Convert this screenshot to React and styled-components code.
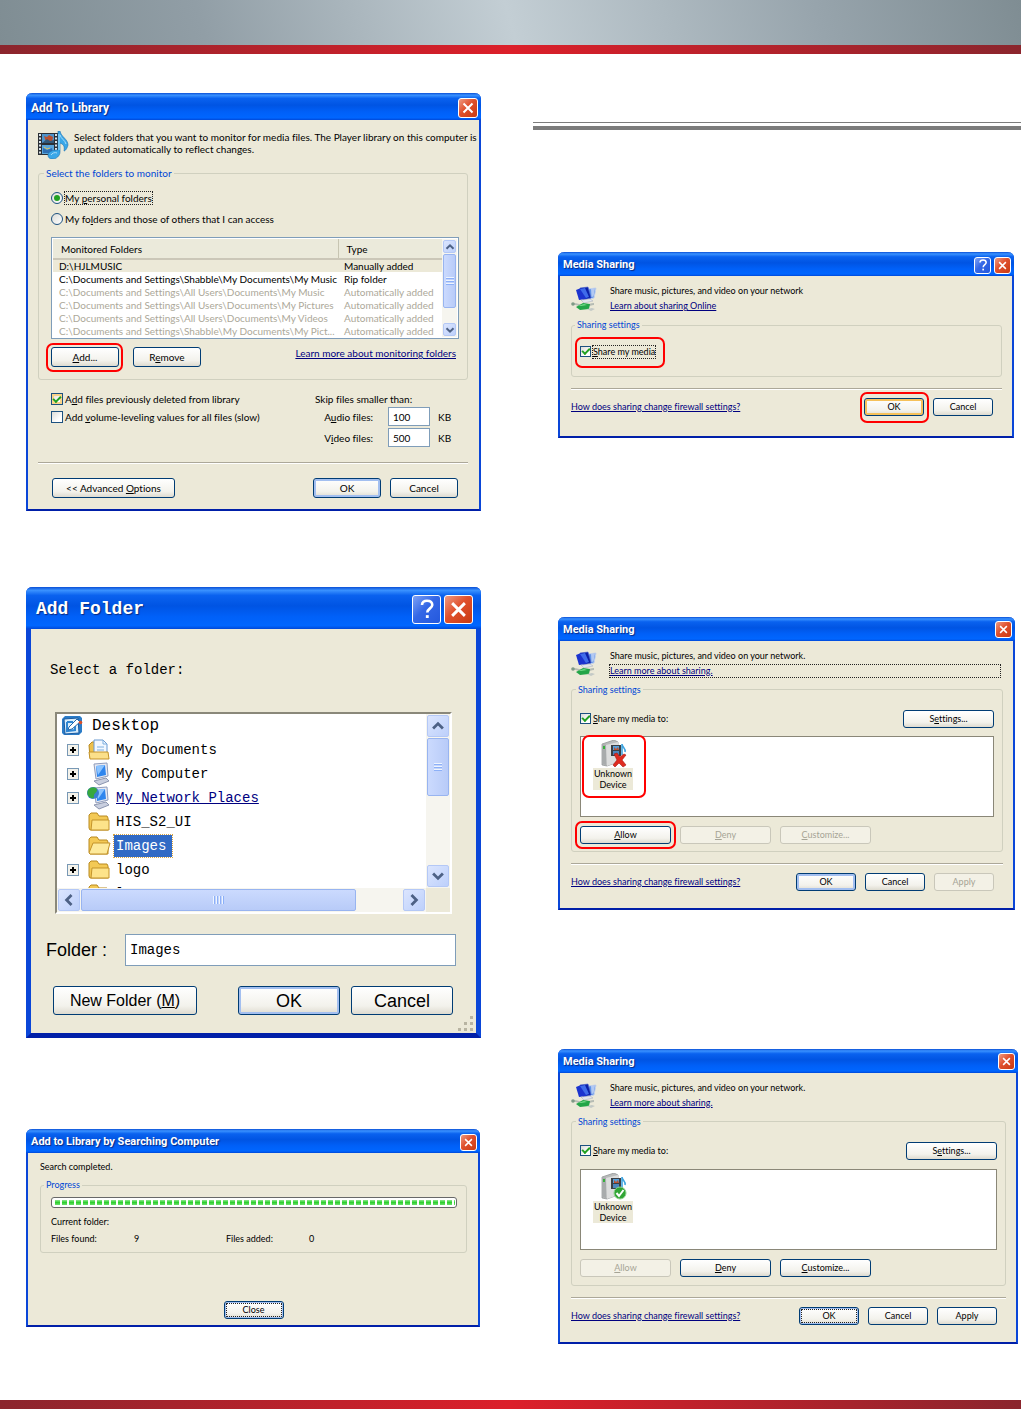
import { useId, useState } from "react";
import styled, { createGlobalStyle, css } from "styled-components";

const GlobalStyle = createGlobalStyle`
  * {
    box-sizing: border-box;
  }
  body {
    margin: 0;
    background: #fff;
    color: #000;
    font-family: Lato, "Liberation Sans", Arial, sans-serif;
    font-size: 10px;
    font-variant-ligatures: none;
    line-height: 12px;
  }
  button,
  input {
    font: inherit;
    color: inherit;
  }
  p,
  ul {
    margin: 0;
    padding: 0;
  }
`;

/* ---------- page ---------- */

const Banner = styled.header`
  height: 54px;
  border-bottom: 9px solid transparent;
  background: linear-gradient(75deg, #7f8d93, #919ea6 20%, #c3ced4 50%, #97a4ac 80%, #7f8d93)
      padding-box,
    linear-gradient(90deg, #8b252d, #dc1f2a 50%, #8b252d) border-box;
`;

const Stripe = styled.footer`
  height: 9px;
  background: linear-gradient(90deg, #8b252d, #dc1f2a 50%, #8b252d);
`;

const Columns = styled.main`
  display: grid;
  grid-template-columns: minmax(0, 455fr) minmax(0, 488fr);
  column-gap: 52px;
  padding-left: 26px;
  padding-bottom: 56px;
`;

const LeftColumn = styled.div`
  display: flex;
  flex-direction: column;
  padding-top: 39px;
  & > :nth-child(2) {
    margin-top: 76px;
  }
  & > :nth-child(3) {
    margin-top: 91px;
  }
`;

const RightColumn = styled.div`
  padding-top: 68px;
`;

const DoubleRule = styled.hr`
  height: 8px;
  margin: 0;
  border: solid #7c7c7c;
  border-width: 1px 0 4px;
`;

const Shots = styled.div`
  display: flex;
  flex-direction: column;
  padding: 122px 3px 0 25px;
  & > :nth-child(2) {
    margin-top: 179px;
  }
  & > :nth-child(3) {
    margin-top: 139px;
  }
`;

/* ---------- window ---------- */

const Frame = styled.section`
  border: solid #0a46d8;
  border-width: 0 ${(p) => p.$edge}px ${(p) => p.$edge}px;
  border-bottom-color: #001fa8;
  border-radius: 6px 6px 0 0;
  background: #ece9d8;
  margin-right: ${(p) => p.$inset || 0}px;
  font-size: ${(p) => (p.$small ? 9 : 10)}px;
`;

const TitleBar = styled.header`
  display: flex;
  align-items: center;
  gap: 3px;
  height: ${(p) => p.$height}px;
  margin: 0 -${(p) => p.$edge}px;
  padding: 2px ${(p) => (p.$edge > 2 ? "8px 0 10px" : "3px 0 5px")};
  border-radius: 6px 6px 0 0;
  background: linear-gradient(
    #0a4fd6,
    #3a92ff 8%,
    #0a62ef 20%,
    #0054e3 45%,
    #0060f8 70%,
    #0066ff 92%,
    #0048d8
  );
  color: #fff;
  h2 {
    flex: 1;
    margin: 0;
    font-size: ${(p) => p.$size}px;
    line-height: 20px;
    font-family: ${(p) => p.$font};
    text-shadow: 1px 1px 1px #0a2a80;
  }
`;

const CaptionButton = styled.button`
  display: flex;
  align-items: center;
  justify-content: center;
  width: ${(p) => p.$size}px;
  height: ${(p) => p.$size}px;
  padding: 0;
  border: 1px solid #fff;
  border-radius: 3px;
  background: ${(p) =>
    p.$help
      ? "linear-gradient(135deg, #7ea2f5, #3467e6 45%, #2458dd)"
      : "linear-gradient(135deg, #ee9a82, #e0502c 45%, #c83a12)"};
`;

const Body = styled.div`
  padding: ${(p) => p.$pad};
`;

const Intro = styled.div`
  display: flex;
  gap: 5px;
  margin-right: -10px;
  svg {
    flex: none;
  }
`;

const Group = styled.fieldset`
  min-width: 0;
  margin: ${(p) => p.$top}px 0 0;
  padding: ${(p) => p.$pad};
  border: 1px solid #d0d0bf;
  border-radius: 3px;
  legend {
    margin-left: -${(p) => p.$outdent || 7}px;
    padding: 0 2px;
    color: #0046d5;
  }
`;

const Divider = styled.hr`
  height: 2px;
  margin: ${(p) => p.$top}px 0 0;
  border: 0;
  border-top: 1px solid #aca899;
  border-bottom: 1px solid #fff;
`;

const Button = styled.button`
  flex: none;
  width: ${(p) => p.$width}px;
  height: ${(p) => p.$height || 18}px;
  padding: 0;
  border: 1px solid #003c74;
  border-radius: 3px;
  background: linear-gradient(#fff, #f3f2ec 70%, #dedbd0);
  text-align: center;
  line-height: 12px;
  ${(p) =>
    p.$primary &&
    css`
      box-shadow: inset 0 0 0 2px #a3bff0;
    `}
  ${(p) =>
    p.$hot &&
    css`
      box-shadow: inset 0 0 0 2px #f6c15a;
    `}
  ${(p) =>
    p.$focused &&
    css`
      outline: 1px dotted #222;
      outline-offset: -3px;
      box-shadow: inset 0 0 0 1px #a3bff0;
    `}
  &:disabled {
    border-color: #c9c7ba;
    background: #f3f1e6;
    color: #a6a495;
  }
`;

const Link = styled.a`
  color: #00007f;
  text-decoration: underline;
`;

const Callout = styled.div`
  position: relative;
  display: inline-flex;
  &::after {
    content: "";
    position: absolute;
    inset: ${(p) => p.$inset};
    border: 2px solid #f00;
    border-radius: 7px;
    pointer-events: none;
  }
`;

const Choice = styled.label`
  display: flex;
  align-items: center;
  gap: 2px;
  span {
    outline: ${(p) => (p.$focused ? "1px dotted #222" : "none")};
  }
`;

const Radio = styled.input.attrs({ type: "radio" })`
  appearance: none;
  display: grid;
  place-items: center;
  width: 12px;
  height: 12px;
  margin: 0;
  border: 1px solid #1c5180;
  border-radius: 50%;
  background: linear-gradient(135deg, #dcdcd7, #fff);
  &:checked::after {
    content: "";
    width: 6px;
    height: 6px;
    border-radius: 50%;
    background: #21a121;
  }
`;

const Check = styled.input.attrs({ type: "checkbox" })`
  appearance: none;
  display: grid;
  place-items: center;
  width: ${(p) => p.$size || 11}px;
  height: ${(p) => p.$size || 11}px;
  margin: 0;
  border: 1px solid #1c5180;
  background: linear-gradient(135deg, #dcdcd7, #fff 70%);
  box-shadow: ${(p) => (p.$hot ? "inset 0 0 0 2px #f9d38a" : "none")};
  &:checked::after {
    content: "";
    width: 6px;
    height: 3px;
    border: solid #21a121;
    border-width: 0 0 2px 2px;
    transform: translateY(-1px) rotate(-45deg);
  }
`;

const TextBox = styled.input`
  width: 100%;
  height: ${(p) => p.$height}px;
  padding: 0 4px;
  border: 1px solid #7f9db9;
  border-radius: 0;
  background: #fff;
`;

/* ---------- scroll bars ---------- */

const Scroll = styled.div`
  display: flex;
  flex-direction: ${(p) => (p.$across ? "row" : "column")};
  gap: 1px;
  padding: 1px;
  background: #f6f5ef;
  ${(p) => (p.$across ? "height" : "width")}: ${(p) => p.$size}px;
`;

const ScrollArrow = styled.button`
  flex: none;
  display: flex;
  align-items: center;
  justify-content: center;
  width: ${(p) => p.$size}px;
  height: ${(p) => p.$size}px;
  padding: 0;
  border: 1px solid #b4c8f6;
  border-radius: 2px;
  background: linear-gradient(135deg, #dbe5fe, #bdd0fb);
`;

const Thumb = styled.div`
  flex: 0 0 ${(p) => p.$length};
  display: flex;
  align-items: center;
  justify-content: center;
  border: 1px solid #98b4f0;
  border-radius: 2px;
  background: linear-gradient(${(p) => (p.$across ? 180 : 90)}deg, #cbdafe, #b8cbf8);
  &::before {
    content: "";
    width: ${(p) => (p.$across ? 11 : 8)}px;
    height: 8px;
    background: repeating-linear-gradient(
      ${(p) => (p.$across ? 90 : 180)}deg,
      #eef4fe 0 1px,
      #8cb0f8 1px 2px,
      transparent 2px 3px
    );
  }
`;

const Spacer = styled.div`
  flex: 1;
`;

const turns = { up: 0, right: 90, down: 180, left: 270 };

function Arrow({ to, size }) {
  return (
    <svg width={size} height={size} viewBox="0 0 10 10">
      <path
        d="M1.5 6.8 5 3.3l3.500 3.500"
        fill="none"
        stroke="#4d6185"
        strokeWidth="2"
        transform={`rotate(${turns[to]} 5 5)`}
      />
    </svg>
  );
}

function ScrollBar({ across, size, length }) {
  const ends = across ? ["left", "right"] : ["up", "down"];
  const glyph = size > 20 ? 14 : 10;
  return (
    <Scroll $across={across} $size={size}>
      <ScrollArrow $size={size - 2} aria-label={`Scroll ${ends[0]}`}>
        <Arrow to={ends[0]} size={glyph} />
      </ScrollArrow>
      <Thumb $across={across} $length={length} />
      <Spacer />
      <ScrollArrow $size={size - 2} aria-label={`Scroll ${ends[1]}`}>
        <Arrow to={ends[1]} size={glyph} />
      </ScrollArrow>
    </Scroll>
  );
}

/* ---------- icons ---------- */

function CloseGlyph({ size }) {
  return (
    <svg width={size} height={size} viewBox="0 0 12 12">
      <path d="M1.500 1.500l9 9M10.500 1.500l-9 9" stroke="#fff" strokeWidth="2" />
    </svg>
  );
}

function HelpGlyph({ size }) {
  return (
    <svg width={size} height={size} viewBox="0 0 12 14">
      <path
        d="M2.500 4.200C2.500 2 4 1.200 6 1.200s3.700 1 3.700 3c0 2.300-3.500 2.500-3.500 5.300"
        fill="none"
        stroke="#fff"
        strokeWidth="1.800"
      />
      <rect x="5.200" y="11.300" width="2" height="2" fill="#fff" />
    </svg>
  );
}

function LibraryIcon() {
  return (
    <svg width="31" height="28" viewBox="0 0 31 28">
      <path d="M0 2h20v22H0z" fill="#2b3036" />
      <path d="M4 3h12v9H4z" fill="#4d94cc" />
      <path d="M4 14h12v9H4z" fill="#59a5da" />
      <path d="M6 5l3 1 2-2 4 2-1 5-3-1-3 1z" fill="#b9502f" />
      <path d="M4 12l5-4 3 2 4-1v3z" fill="#315878" />
      <path d="M5 17l4 2 5-2 1 5H5z" fill="#2e6fb4" />
      <path d="M6 16l3 2 3-1" fill="none" stroke="#e0c25b" />
      <path
        d="M2 3v20M18 3v20"
        stroke="#d9e2e8"
        strokeWidth="2"
        strokeDasharray="2 1.500"
      />
      <path
        d="M20 0h2c1 6 8 8 8 14-1 4-3 6-4 6 1-5-1-7-4-8v9c0 4-4 7-7 7-4 0-5-2-5-4 0-3 4-5 10-5z"
        fill="#3aa7e8"
        stroke="#1c6fae"
        strokeWidth=".6"
      />
      <path d="M21 3v16" stroke="#6cc4f4" strokeWidth="2" />
      <path d="M22 4c1 4 5 5 6 9M13 24c1-2 4-3 6-2" fill="none" stroke="#a9dcfa" />
    </svg>
  );
}

function NetworkIcon() {
  return (
    <svg width="28" height="26" viewBox="0 0 28 26">
      <path d="M17 3l8-1-2 10-5 1z" fill="#5f93e8" stroke="#c5d2ea" />
      <path d="M20 3l4-.5-1.500 8-2 .5z" fill="#b3c9f2" />
      <path d="M9 2l8-1 3 11-8 2z" fill="#0a1fa8" stroke="#4862cc" strokeWidth=".6" />
      <path d="M5 4l5-2 6 11-8 1z" fill="#1b33cf" />
      <path d="M9 3l6 9 3-1-4-9z" fill="#3f6bea" />
      <path d="M10 14l9-1 3 2-9 2z" fill="#e3e6ec" stroke="#a5abb8" strokeWidth=".5" />
      <path d="M1 18c5-1 9 3 14 2s4-2 8-2" fill="none" stroke="#b6bcb4" strokeWidth="2" />
      <path d="M5 21l7-4 7 1-1 5-9 1z" fill="#23a548" />
      <path d="M7 20l6-2 3 1-6 1z" fill="#73dc88" />
      <path d="M16 23l5-1 3 1-4 2z" fill="#c3c9c6" />
      <circle cx="2" cy="18" r="1.800" fill="#7f9a86" />
    </svg>
  );
}

function DeviceIcon({ allowed }) {
  return (
    <svg width="27" height="28" viewBox="0 0 27 28">
      <path d="M2 4l12-4 4 2v20L7 26l-5-1z" fill="#b9bbbb" stroke="#8b8e8f" strokeWidth=".7" />
      <path d="M6 5l12-3v20L7 26z" fill="#dcdddd" />
      <path d="M2 4l4 1v20l-4-1z" fill="#a8abac" />
      <rect x="3" y="6" width="2" height="3" fill="#35b13b" />
      <path d="M11 5h10v11H11z" fill="#3b3f45" />
      <path d="M13 6h6v4h-6z" fill="#56a0dc" />
      <path d="M13 11h6v4h-6z" fill="#4c86bd" />
      <path d="M14 7l2 2 2-2 1 3h-5z" fill="#bb5434" />
      <path
        d="M22 4c0 3 4 4 3 8M22 4v11"
        fill="none"
        stroke="#3fa4df"
        strokeWidth="1.600"
      />
      {allowed ? (
        <>
          <circle cx="20" cy="20" r="6" fill="#31a535" stroke="#8ed18d" />
          <path d="M16.500 20l2.500 3 4.500-6" fill="none" stroke="#fff" strokeWidth="2" />
        </>
      ) : (
        <path
          d="M14 14l3-1 3 4 4-3 2 1-4 5 4 5-3 2-4-4-4 4-2-2 4-5z"
          fill="#e02b20"
          stroke="#a51912"
          strokeWidth=".6"
        />
      )}
    </svg>
  );
}

function DesktopIcon() {
  return (
    <svg width="24" height="24" viewBox="0 0 24 24">
      <path d="M2 5l3-3h15l2 2v14l-3 3H4l-2-2z" fill="#2b7cc7" />
      <path d="M4 5l14-1 1 15-14 1z" fill="#d9edfb" stroke="#1a5aa0" />
      <path d="M7 8h6M7 8v9l8-1v-4" fill="none" stroke="#2f86d2" strokeWidth="2" />
      <path d="M9 13l8-8 3 3-8 7-4 1z" fill="#fff" stroke="#1f66ac" />
      <circle cx="20.500" cy="8.500" r="1.800" fill="#d8502a" />
    </svg>
  );
}

function DocumentsIcon() {
  return (
    <svg width="24" height="22" viewBox="0 0 24 22">
      <path d="M2 6l3-3h4v16H3z" fill="#eec04a" stroke="#b98a20" />
      <path d="M7 1h9l4 4v13H7z" fill="#f2f8ff" stroke="#6a9ad0" />
      <path d="M16 1v4h4M10 8h7M10 11h7" fill="none" stroke="#7fb0e0" />
      <path d="M2 13h19l1 7H3z" fill="#fbe08a" stroke="#c3932a" />
    </svg>
  );
}

function ComputerIcon({ network }) {
  return (
    <svg width="24" height="24" viewBox="0 0 24 24">
      <path d="M7 2l13-1 1 13-12 3z" fill="#e8eaf2" stroke="#8f9cbb" />
      <path d="M9 4l9-1 1 10-9 2z" fill="#2f86ee" />
      <path d="M9 4l9-1-7 10z" fill="#8cc4ff" />
      <path d="M7 19l12-3 3 3-10 4z" fill="#c9cfdf" stroke="#8b95ae" />
      {network && (
        <>
          <circle cx="6" cy="7" r="6" fill="#3a7fd0" />
          <path d="M1 4c3-4 9-3 9 0s-4 3-3 8c-5 1-8-4-6-8z" fill="#37a83e" />
        </>
      )}
    </svg>
  );
}

function FolderIcon({ open }) {
  return (
    <svg width="24" height="20" viewBox="0 0 24 20">
      <path d="M2 3l2-2h6l2 3h8l1 2v12H3L2 16z" fill="#f3c955" stroke="#b98a20" />
      {open ? (
        <path d="M2 17L6 7h17l-3 11H3z" fill="#fdea9c" stroke="#c3932a" />
      ) : (
        <path d="M5 8h17v10H4z" fill="#fde38a" stroke="#c3932a" />
      )}
    </svg>
  );
}

/* ---------- shared pieces ---------- */

function Window({ title, height, edge = 2, size = 11, mono, help, small, button = 18, inset, children }) {
  const font = mono ? '"Liberation Mono", monospace' : 'Roboto, "Liberation Sans", sans-serif';
  const glyph = button > 20 ? 17 : button - 8;
  return (
    <Frame $edge={edge} $inset={inset} $small={small}>
      <TitleBar $height={height} $edge={edge} $size={size} $font={font}>
        <h2>{title}</h2>
        {help && (
          <CaptionButton $help $size={button} aria-label="Help">
            <HelpGlyph size={glyph + 3} />
          </CaptionButton>
        )}
        <CaptionButton $size={button} aria-label="Close">
          <CloseGlyph size={glyph} />
        </CaptionButton>
      </TitleBar>
      {children}
    </Frame>
  );
}

/* ---------- add to library ---------- */

const RadioList = styled.div`
  display: grid;
  gap: 9px;
  justify-items: start;
`;

const ListBox = styled.div`
  display: flex;
  margin: 12px -3px 0 0;
  padding: 1px;
  border: 1px solid #7f9db9;
  background: #fff;
`;

const FolderTable = styled.table`
  flex: 1;
  min-width: 0;
  table-layout: fixed;
  border-collapse: collapse;
  th,
  td {
    padding: 0 0 0 6px;
    overflow: hidden;
    font-weight: normal;
    text-align: left;
    white-space: nowrap;
  }
  th {
    height: 20px;
    padding-left: 8px;
    border-bottom: 2px solid #cbc7b8;
    background: #ebeadb;
  }
  th + th {
    border-left: 1px solid #c7c5b2;
  }
  th:last-child {
    width: 104px;
  }
  td {
    height: 13px;
  }
`;

const FolderRow = styled.tr`
  color: ${(p) => (p.$auto ? "#aca899" : "#000")};
  background: ${(p) => (p.$selected ? "#ece9d8" : "#fff")};
`;

const ButtonRow = styled.div`
  display: flex;
  align-items: ${(p) => p.$align || "center"};
  gap: ${(p) => p.$gap || 9}px;
  margin-top: ${(p) => p.$top}px;
`;

const Options = styled.div`
  display: flex;
  justify-content: space-between;
  padding: 13px 10px 0 13px;
`;

const CheckList = styled.div`
  display: grid;
  align-content: start;
  gap: 6px;
`;

const SkipSizes = styled.div`
  display: grid;
  grid-template-columns: 65px 42px 20px;
  column-gap: 8px;
  row-gap: 2px;
  align-items: center;
  p {
    grid-column: 1 / -1;
  }
  label {
    padding-right: 7px;
    text-align: right;
  }
`;

const folders = [
  { path: "D:\\HJLMUSIC", type: "Manually added", selected: true },
  { path: "C:\\Documents and Settings\\Shabble\\My Documents\\My Music", type: "Rip folder" },
  { path: "C:\\Documents and Settings\\All Users\\Documents\\My Music", auto: true },
  { path: "C:\\Documents and Settings\\All Users\\Documents\\My Pictures", auto: true },
  { path: "C:\\Documents and Settings\\All Users\\Documents\\My Videos", auto: true },
  { path: "C:\\Documents and Settings\\Shabble\\My Documents\\My Pict...", auto: true },
];

function AddToLibrary() {
  const [scope, setScope] = useState("mine");
  const id = useId();

  return (
    <Window title="Add To Library" height={27} size={12} button={20}>
      <Body $pad="11px 11px 11px 10px">
        <Intro>
          <LibraryIcon />
          <p>
            Select folders that you want to monitor for media files. The Player library on this
            computer is updated automatically to reflect changes.
          </p>
        </Intro>
        <Group $top={8} $pad="13px 11px 12px 12px">
          <legend>Select the folders to monitor</legend>
          <RadioList>
            <Choice $focused>
              <Radio name={id} checked={scope === "mine"} onChange={() => setScope("mine")} />
              <span>
                My <u>p</u>ersonal folders
              </span>
            </Choice>
            <Choice>
              <Radio name={id} checked={scope === "all"} onChange={() => setScope("all")} />
              <span>
                My fo<u>l</u>ders and those of others that I can access
              </span>
            </Choice>
          </RadioList>
          <ListBox>
            <FolderTable>
              <thead>
                <tr>
                  <th>Monitored Folders</th>
                  <th>Type</th>
                </tr>
              </thead>
              <tbody>
                {folders.map((folder) => (
                  <FolderRow key={folder.path} $auto={folder.auto} $selected={folder.selected}>
                    <td>{folder.path}</td>
                    <td>{folder.type || "Automatically added"}</td>
                  </FolderRow>
                ))}
              </tbody>
            </FolderTable>
            <ScrollBar size={15} length="54px" />
          </ListBox>
          <ButtonRow $top={8} $gap={14} $align="flex-start">
            <Callout $inset="-4px -4px -5px -5px">
              <Button $width={68} $height={20}>
                <u>A</u>dd...
              </Button>
            </Callout>
            <Button $width={68} $height={20}>
              R<u>e</u>move
            </Button>
            <Spacer />
            <Link href="#monitoring">Learn more about monitoring folders</Link>
          </ButtonRow>
        </Group>
        <Options>
          <CheckList>
            <Choice>
              <Check $size={12} $hot defaultChecked />
              <span>
                A<u>d</u>d files previously deleted from library
              </span>
            </Choice>
            <Choice>
              <Check $size={12} />
              <span>
                Add <u>v</u>olume-leveling values for all files (slow)
              </span>
            </Choice>
          </CheckList>
          <SkipSizes>
            <p>Skip files smaller than:</p>
            <label htmlFor={`${id}audio`}>
              A<u>u</u>dio files:
            </label>
            <TextBox id={`${id}audio`} $height={19} defaultValue="100" />
            <span>KB</span>
            <label htmlFor={`${id}video`}>
              V<u>i</u>deo files:
            </label>
            <TextBox id={`${id}video`} $height={19} defaultValue="500" />
            <span>KB</span>
          </SkipSizes>
        </Options>
        <Divider $top={15} />
        <Body $pad="0 10px 0 14px">
          <ButtonRow $top={14}>
            <Button $width={123} $height={20}>
              &lt;&lt; Advanced <u>O</u>ptions
            </Button>
            <Spacer />
            <Button $width={68} $height={20} $primary>
              OK
            </Button>
            <Button $width={68} $height={20}>
              Cancel
            </Button>
          </ButtonRow>
        </Body>
      </Body>
    </Window>
  );
}

/* ---------- add folder ---------- */

const FolderBody = styled.div`
  padding: 32px 20px 18px 15px;
  font-family: "Liberation Mono", monospace;
  font-size: 14px;
  line-height: 18px;
`;

const Prompt = styled.p`
  padding-left: 4px;
`;

const TreeBox = styled.div`
  display: grid;
  grid-template-columns: minmax(0, 1fr) 24px;
  margin: 33px 4px 0 9px;
  border: 2px solid #fff;
  border-top-color: #8a887a;
  border-left-color: #8a887a;
`;

const Tree = styled.ul`
  height: 174px;
  overflow: hidden;
  background: #fff;
  list-style: none;
`;

const TreeItem = styled.li`
  display: flex;
  align-items: center;
  gap: ${(p) => (p.$root ? 8 : 5)}px;
  height: 24px;
  padding-left: ${(p) => (p.$root ? 3 : 10)}px;
  font-size: ${(p) => (p.$root ? 16 : 14)}px;
  a {
    color: #00007f;
  }
`;

const Expander = styled.button`
  width: 12px;
  height: 12px;
  margin-right: 3px;
  padding: 0;
  border: 1px solid #7898b5;
  background: linear-gradient(#000, #000) center / 6px 2px no-repeat,
    linear-gradient(#000, #000) center / 2px 6px no-repeat, #f4f2ea;
  visibility: ${(p) => (p.$hidden ? "hidden" : "visible")};
`;

const Picked = styled.span`
  margin-left: -2px;
  padding: 2px 6px 2px 2px;
  outline: 1px dotted #d9a441;
  background: #316ac5;
  color: #fff;
`;

const FolderField = styled.div`
  display: grid;
  grid-template-columns: 79px 1fr;
  align-items: center;
  margin-top: 20px;
  label {
    font-family: "Liberation Sans", sans-serif;
    font-size: 18px;
  }
`;

const BigButtons = styled.div`
  display: flex;
  gap: 11px;
  margin-top: 20px;
  padding: 0 3px 0 7px;
  font-family: "Liberation Sans", sans-serif;
  font-size: 18px;
  button:first-child {
    font-size: 16px;
  }
`;

const Grip = styled.div`
  position: absolute;
  right: 2px;
  bottom: 2px;
  line-height: 0;
`;

const Anchor = styled.div`
  position: relative;
`;

function AddFolder() {
  return (
    <Window title="Add Folder" height={42} edge={5} size={18} button={29} mono help>
      <Anchor>
        <FolderBody>
          <Prompt>Select a folder:</Prompt>
          <TreeBox>
            <Tree>
              <TreeItem $root>
                <DesktopIcon />
                Desktop
              </TreeItem>
              <TreeItem>
                <Expander aria-label="Expand My Documents" />
                <DocumentsIcon />
                My Documents
              </TreeItem>
              <TreeItem>
                <Expander aria-label="Expand My Computer" />
                <ComputerIcon />
                My Computer
              </TreeItem>
              <TreeItem>
                <Expander aria-label="Expand My Network Places" />
                <ComputerIcon network />
                <a href="#network">My Network Places</a>
              </TreeItem>
              <TreeItem>
                <Expander $hidden />
                <FolderIcon />
                HIS_S2_UI
              </TreeItem>
              <TreeItem>
                <Expander $hidden />
                <FolderIcon open />
                <Picked>Images</Picked>
              </TreeItem>
              <TreeItem>
                <Expander aria-label="Expand logo" />
                <FolderIcon />
                logo
              </TreeItem>
              <TreeItem>
                <Expander $hidden />
                <FolderIcon />l
              </TreeItem>
            </Tree>
            <ScrollBar size={24} length="58px" />
            <ScrollBar across size={24} length="275px" />
          </TreeBox>
          <FolderField>
            <label htmlFor="folder-name">Folder :</label>
            <TextBox id="folder-name" $height={32} defaultValue="Images" />
          </FolderField>
          <BigButtons>
            <Button $width={144} $height={29}>
              New Folder (<u>M</u>)
            </Button>
            <Spacer />
            <Button $width={102} $height={29} $primary>
              OK
            </Button>
            <Button $width={102} $height={29}>
              Cancel
            </Button>
          </BigButtons>
        </FolderBody>
        <Grip>
          <svg width="16" height="16" viewBox="0 0 16 16" fill="#b8b4a2">
            <path d="M12 1h3v3h-3zM6 7h3v3H6zM12 7h3v3h-3zM0 13h3v3H0zM6 13h3v3H6zM12 13h3v3h-3z" />
          </svg>
        </Grip>
      </Anchor>
    </Window>
  );
}

/* ---------- search progress ---------- */

const Progress = styled.div`
  height: 11px;
  padding: 2px 1px 2px 3px;
  border: 1px solid #686868;
  border-radius: 3px;
  background: #fff;
  &::before {
    content: "";
    display: block;
    width: ${(p) => p.$value}%;
    height: 5px;
    background: repeating-linear-gradient(90deg, transparent 0 5px, #fff 5px 7px),
      linear-gradient(#8fe88f, #2fd02f 50%, #6fdf6f);
  }
`;

const Stats = styled.dl`
  display: grid;
  grid-template-columns: 83px 92px 83px 1fr;
  row-gap: 5px;
  margin: 8px 0 0;
  dd {
    margin: 0;
  }
  dd:first-of-type {
    grid-column: 2 / -1;
  }
`;

const Centered = styled.div`
  display: flex;
  justify-content: center;
  margin-top: 48px;
`;

function SearchProgress() {
  return (
    <Window title="Add to Library by Searching Computer" height={24} button={17} inset={1} small>
      <Body $pad="8px 11px 6px 12px">
        <p>Search completed.</p>
        <Group $top={6} $pad="6px 9px 7px 10px">
          <legend>Progress</legend>
          <Progress $value={100} role="progressbar" aria-valuenow={100} />
          <Stats>
            <dt>Current folder:</dt>
            <dd />
            <dt>Files found:</dt>
            <dd>9</dd>
            <dt>Files added:</dt>
            <dd>0</dd>
          </Stats>
        </Group>
        <Centered>
          <Button $width={60} $focused>
            Close
          </Button>
        </Centered>
      </Body>
    </Window>
  );
}

/* ---------- media sharing ---------- */

const SharingBody = styled.div`
  padding: 9px 10px ${(p) => p.$bottom}px 11px;
`;

const SharingIntro = styled.div`
  display: grid;
  grid-template-columns: 39px 1fr;
  svg {
    margin-top: 1px;
  }
`;

const SharingText = styled.div`
  display: grid;
  gap: 3px;
  justify-items: ${(p) => (p.$focused ? "stretch" : "start")};
  margin-right: 3px;
  a {
    outline: ${(p) => (p.$focused ? "1px dotted #222" : "none")};
  }
`;

const ShareBar = styled.div`
  display: flex;
  align-items: center;
  justify-content: space-between;
`;

const DeviceList = styled.div`
  height: 81px;
  margin-top: ${(p) => p.$top}px;
  padding: 3px 0 0 12px;
  border: 1px solid #8a8778;
  background: #fff;
`;

const Device = styled.div`
  display: grid;
  justify-items: center;
  width: 40px;
  span {
    width: 40px;
    background: #ece9d8;
    line-height: 11px;
    text-align: center;
  }
`;

const Footer = styled.footer`
  display: flex;
  align-items: center;
  gap: 9px;
  margin-top: 8px;
  padding-right: 9px;
  a {
    flex: 1;
  }
`;

function MediaSharing({ link, text, linkFocused, help, inset, bottom = 17, children, footer }) {
  return (
    <Window title="Media Sharing" height={24} button={17} help={help} inset={inset} small>
      <SharingBody $bottom={bottom}>
        <SharingIntro>
          <NetworkIcon />
          <SharingText $focused={linkFocused}>
            <p>{text}</p>
            <Link href="#sharing">{link}</Link>
          </SharingText>
        </SharingIntro>
        {children}
        <Divider $top={11} />
        <Footer>
          <Link href="#firewall">How does sharing change firewall settings?</Link>
          {footer}
        </Footer>
      </SharingBody>
    </Window>
  );
}

function ShareOff() {
  return (
    <MediaSharing
      text="Share music, pictures, and video on your network"
      link="Learn about sharing Online"
      help
      inset={4}
      bottom={20}
      footer={
        <>
          <Callout $inset="-6px -5px -7px -4px">
            <Button $width={60} $hot>
              OK
            </Button>
          </Callout>
          <Button $width={60}>Cancel</Button>
        </>
      }
    >
      <Group $top={7} $pad="14px 8px 18px 8px" $outdent={5}>
        <legend>Sharing settings</legend>
        <Callout $inset="-9px -10px -10px -5px">
          <Choice $focused>
            <Check defaultChecked />
            <span>
              <u>S</u>hare my media
            </span>
          </Choice>
        </Callout>
      </Group>
    </MediaSharing>
  );
}

function ShareTo({ allowed, focusLink, inset }) {
  const device = (
    <Device>
      <DeviceIcon allowed={allowed} />
      <span>Unknown Device</span>
    </Device>
  );
  const allow = (
    <Button $width={91} disabled={allowed}>
      <u>A</u>llow
    </Button>
  );

  return (
    <MediaSharing
      text="Share music, pictures, and video on your network."
      link="Learn more about sharing."
      linkFocused={focusLink}
      inset={inset}
      footer={
        <>
          <Button $width={60} $primary={!allowed} $focused={allowed}>
            OK
          </Button>
          <Button $width={60}>Cancel</Button>
          <Button $width={60} disabled={!allowed}>
            Apply
          </Button>
        </>
      }
    >
      <Group $top={7} $pad={allowed ? "14px 8px 8px" : "14px 8px 7px"} $outdent={4}>
        <legend>Sharing settings</legend>
        <ShareBar>
          <Choice>
            <Check defaultChecked />
            <span>
              <u>S</u>hare my media to:
            </span>
          </Choice>
          <Button $width={91}>
            S<u>e</u>ttings...
          </Button>
        </ShareBar>
        <DeviceList $top={allowed ? 9 : 8}>
          {allowed ? device : <Callout $inset="-5px -13px -8px -11px">{device}</Callout>}
        </DeviceList>
        <ButtonRow $top={9}>
          {allowed ? allow : <Callout $inset="-5px">{allow}</Callout>}
          <Button $width={91} disabled={!allowed}>
            <u>D</u>eny
          </Button>
          <Button $width={91} disabled={!allowed}>
            <u>C</u>ustomize...
          </Button>
        </ButtonRow>
      </Group>
    </MediaSharing>
  );
}

export default function App() {
  return (
    <>
      <GlobalStyle />
      <Banner />
      <Columns>
        <LeftColumn>
          <AddToLibrary />
          <AddFolder />
          <SearchProgress />
        </LeftColumn>
        <RightColumn>
          <DoubleRule />
          <Shots>
            <ShareOff />
            <ShareTo focusLink inset={3} />
            <ShareTo allowed />
          </Shots>
        </RightColumn>
      </Columns>
      <Stripe />
    </>
  );
}
